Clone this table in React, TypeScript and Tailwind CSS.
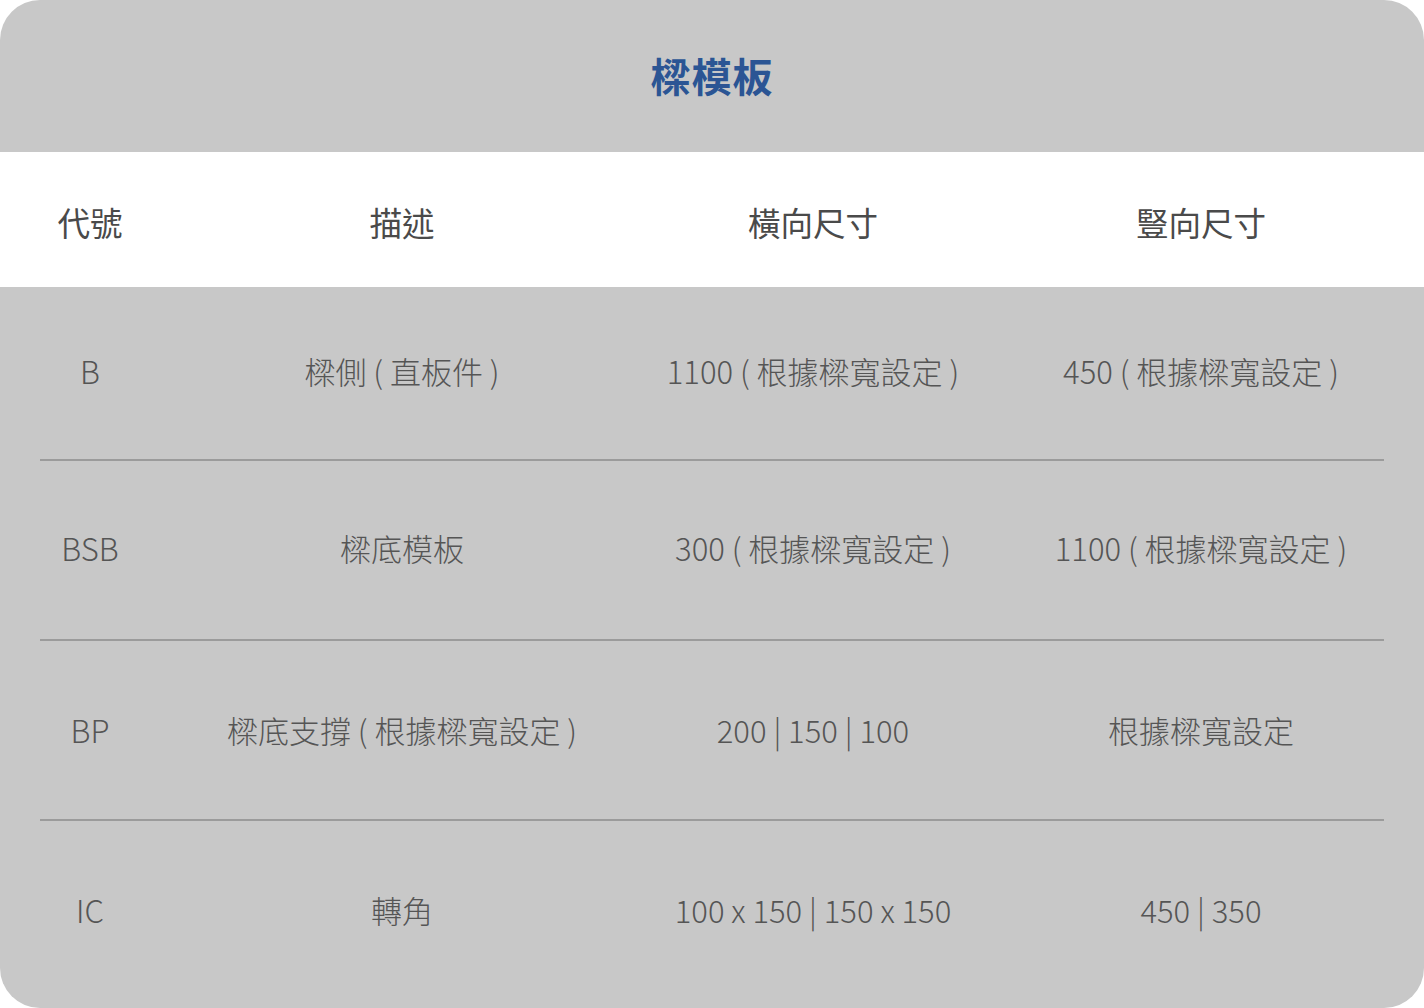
import React from 'react'

const rows = [
  { code: 'B', desc: '樑側 ( 直板件 )', h: '1100 ( 根據樑寬設定 )', v: '450 ( 根據樑寬設定 )', height: 'h-[172px] pb-[4px]' },
  { code: 'BSB', desc: '樑底模板', h: '300 ( 根據樑寬設定 )', v: '1100 ( 根據樑寬設定 )', height: 'h-[178px] pb-[4px]' },
  { code: 'BP', desc: '樑底支撐 ( 根據樑寬設定 )', h: '200 | 150 | 100', v: '根據樑寬設定', height: 'h-[178px]' },
  { code: 'IC', desc: '轉角', h: '100 x 150 | 150 x 150', v: '450 | 350', height: 'h-[186px] pb-[8px]' },
]

const cols = 'grid grid-cols-[124px_476px_346px_430px] items-center'

const App = () => {
  return (
    <div
      className="w-[1424px] h-[1008px] bg-white"
      style={{ fontFamily: '"Noto Sans CJK TC", "Noto Sans", sans-serif' }}
    >
      <div className="w-full h-full rounded-[40px] bg-[#c8c8c8] overflow-hidden flex flex-col">
        <div className="h-[152px] shrink-0 flex items-center justify-center">
          <h1 className="text-[40px] font-bold text-[#2b5594] tracking-[1px] mb-[2px]">樑模板</h1>
        </div>
        <div className={`${cols} h-[135px] shrink-0 bg-white px-[40px] text-[32.5px] text-[#4a4a4a] pt-[6px]`}>
          <div className="text-center pr-[24px]">代號</div>
          <div className="text-center">描述</div>
          <div className="text-center">橫向尺寸</div>
          <div className="text-center">豎向尺寸</div>
        </div>
        {rows.map((r, i) => (
          <div key={r.code} className="flex flex-col shrink-0">
            <div className={`${cols} ${r.height} px-[40px] text-[31px] font-light text-[#555555]`}>
              <div className="text-center pr-[24px]">{r.code}</div>
              <div className="text-center">{r.desc}</div>
              <div className="text-center">{r.h}</div>
              <div className="text-center">{r.v}</div>
            </div>
            {i < rows.length - 1 && <div className="mx-[40px] h-[2px] bg-[#9b9b9b]" />}
          </div>
        ))}
      </div>
    </div>
  )
}

export default App
